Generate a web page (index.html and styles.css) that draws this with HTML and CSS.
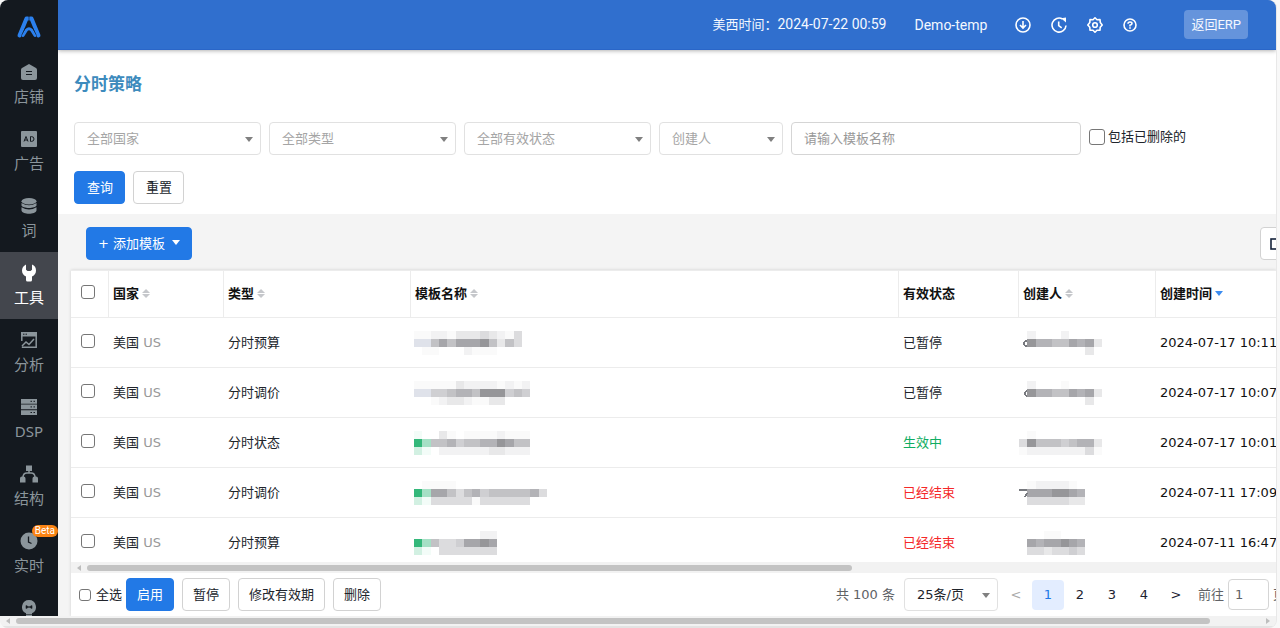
FILE: index.html
```html
<!DOCTYPE html>
<html lang="zh-CN">
<head>
<meta charset="utf-8">
<title>分时策略</title>
<link rel="stylesheet" href="styles.css">
</head>
<body>
<div class="window">
  <div class="shell">
    <nav class="sidebar">
      <a class="logo" href="#" aria-label="首页">
        <svg width="26" height="24" viewBox="0 0 26 24"><g fill="none" stroke="#2b80ee" stroke-width="4" stroke-linejoin="round" stroke-linecap="round"><path d="M3.500 20.500L10.500 3.500h1.500M22.500 20.500L15.500 3.500H14"/><path stroke-width="3" d="M7 20.500l3.500-5.500q2.500-2.500 5 0l3.500 5.500"/></g><path d="M13 1v4M5.500 20.500l4-8M20.500 20.500l-4-8" stroke="#14191f" stroke-width=".6"/></svg>
      </a>
      <a class="nav-item" href="#">
        <svg width="16" height="16" viewBox="0 0 16 16"><path fill="currentColor" d="M8 0l7 4c.6.400 1 .8 1 1.500V14q0 2-2 2H2q-2 0-2-2V5.500C0 4.800.4 4.400 1 4z"/><path d="M5 7.500h6M5 10.500h6" stroke="#14191f" stroke-width="1.200"/></svg>
        <span>店铺</span></a>
      <a class="nav-item" href="#">
        <svg width="16" height="16" viewBox="0 0 16 16"><rect width="16" height="16" rx="1" fill="currentColor"/><path d="M3 10.500l2-5 2 5M3.700 9h2.600M9.500 5.600v4.800h1q2.500 0 2.500-2.400t-2.500-2.400z" fill="none" stroke="#14191f"/></svg>
        <span>广告</span></a>
      <a class="nav-item" href="#">
        <svg width="16" height="16" viewBox="0 0 16 16"><g fill="currentColor"><ellipse cx="8" cy="3.200" rx="7.500" ry="3.200"/><path d="M.5 5q7.500 4.500 15 0v2.500c-1 3.300-14 3.300-15 0z"/><path d="M.5 9.300q7.500 4.500 15 0V12.500c-1 4.300-14 4.300-15 0z"/></g></svg>
        <span>词</span></a>
      <a class="nav-item active" href="#">
        <svg width="16" height="18" viewBox="0 0 16 18"><path fill="currentColor" d="M5 .5v5.200l1.500 1.300h3L11 5.700V.5q4 1.500 4 6 0 4-4 6V16q0 1.500-1.500 1.500h-3Q5 17.500 5 16v-3.500q-4-2-4-6t4-6z"/></svg>
        <span>工具</span></a>
      <a class="nav-item" href="#">
        <svg width="16" height="16" viewBox="0 0 16 16"><path fill="currentColor" d="M0 0h16v4.500H0z"/><path fill="none" stroke="currentColor" stroke-width="1.500" d="M.8 9V.8M15.200 1v14.200H.8M1 14l4-4 3 2.500L13 7"/><path d="M2 2.200h1.500M4.500 2.200H6" stroke="#14191f"/></svg>
        <span>分析</span></a>
      <a class="nav-item" href="#">
        <svg width="16" height="18" viewBox="0 0 16 18"><path fill="currentColor" d="M0 1h16v4.700H0zM0 6.600h16v4.700H0zM0 12.200h16v4.700H0z"/><path d="M9.500 3.300H11M12.500 3.300H14M9.500 8.900H11M12.500 8.900H14M9.500 14.500H11M12.500 14.500H14" stroke="#14191f"/></svg>
        <span>DSP</span></a>
      <a class="nav-item" href="#">
        <svg width="18" height="17" viewBox="0 0 18 17"><path fill="currentColor" d="M6 0h6v5.500H6zM0 13q0-2 2-2h1.500q2 0 2 2v4H0zM12.500 13q0-2 2-2H16q2 0 2 2v4h-5.500z"/><path d="M9 5v2.500M3 12q0-4.500 4-4.500h4q4 0 4 4.500" fill="none" stroke="currentColor" stroke-width="1.500"/></svg>
        <span>结构</span></a>
      <a class="nav-item" href="#">
        <svg width="18" height="18" viewBox="0 0 18 18"><circle cx="9" cy="9" r="8.500" fill="currentColor"/><path d="M8.500 4.500V10l3 1.500" fill="none" stroke="#14191f" stroke-width="1.300"/></svg>
        <span>实时</span><b class="beta">Beta</b></a>
      <a class="nav-item" href="#" aria-label="更多">
        <svg width="16" height="18" viewBox="0 0 16 18"><path fill="currentColor" d="M8 1a7 7 0 0 1 3 13.300V18H5v-3.700A7 7 0 0 1 8 1z"/><path d="M5 6.500v3l3-1.500 3 1.500v-3L8 8zM5 15.500h6" fill="#14191f" stroke="#14191f" stroke-width=".6"/></svg>
      </a>
    </nav>

    <div class="page">
      <header class="topbar">
        <span class="clock"><span class="zone">美西时间：</span>2024-07-22 00:59</span>
        <span class="user">Demo-temp</span>
        <div class="top-icons">
          <button class="icon-button" aria-label="下载"><svg width="16" height="16" viewBox="0 0 16 16"><g fill="none" stroke="#fff" stroke-width="1.600"><circle cx="8" cy="8" r="7"/><path d="M8 4v6.500M5 8l3 3 3-3"/></g></svg></button>
          <button class="icon-button" aria-label="历史"><svg width="16" height="16" viewBox="0 0 16 16"><g fill="none" stroke="#fff" stroke-width="1.600"><path d="M11.500 2A7 7 0 1 0 15 8.500M7.700 4.500v4.200l3 2.200"/></g><path d="M10 1.200l5-.7v5z" fill="#fff"/></svg></button>
          <button class="icon-button" aria-label="设置"><svg width="16" height="16" viewBox="0 0 16 16"><g fill="none" stroke="#fff" stroke-width="1.600" stroke-linejoin="round"><path d="M8 .8l2 2 3-.2.300 3L15.200 8l-2 2.300-.2 3-3-.1-2 2-2-2-3 .1-.2-3L.8 8l2-2.400.200-3 3 .2z"/><circle cx="8" cy="8" r="2.300"/></g></svg></button>
          <button class="icon-button" aria-label="帮助"><svg width="14" height="14" viewBox="0 0 14 14"><g fill="none" stroke="#fff" stroke-width="1.600"><circle cx="7" cy="7" r="6"/><path d="M5 5.800Q5 4 7 4t2 1.600Q9 6.700 7 7.200v1.300M7 9.300v1.500"/></g></svg></button>
        </div>
        <button class="erp">返回ERP</button>
      </header>

      <section class="search">
        <h1>分时策略</h1>
        <form class="filters">
          <span class="select"><select aria-label="国家"><option>全部国家</option></select></span>
          <span class="select"><select aria-label="类型"><option>全部类型</option></select></span>
          <span class="select"><select aria-label="有效状态"><option>全部有效状态</option></select></span>
          <span class="select narrow"><select aria-label="创建人"><option>创建人</option></select></span>
          <input class="name-input" type="text" placeholder="请输入模板名称" aria-label="模板名称">
          <label class="deleted"><input type="checkbox">包括已删除的</label>
        </form>
        <div class="actions">
          <button class="btn primary">查询</button>
          <button class="btn">重置</button>
        </div>
      </section>

      <section class="results">
        <div class="toolbar">
          <button class="btn primary add"><span class="plus">+</span>添加模板<i class="caret"></i></button>
          <button class="btn columns" aria-label="列设置"><svg width="14" height="14" viewBox="0 0 14 14"><rect x="1" y="2" width="12" height="10" fill="none" stroke="#16233b" stroke-width="1.600"/></svg></button>
        </div>
        <div class="panel">
          <div class="table-area">
            <table>
              <colgroup><col class="c-check"><col class="c-country"><col class="c-type"><col><col class="c-status"><col class="c-creator"><col class="c-time"></colgroup>
              <thead>
                <tr>
                  <th class="check"><input type="checkbox" aria-label="选择全部"></th>
                  <th>国家<i class="sort"></i></th>
                  <th>类型<i class="sort"></i></th>
                  <th>模板名称<i class="sort"></i></th>
                  <th>有效状态</th>
                  <th>创建人<i class="sort"></i></th>
                  <th>创建时间<i class="sort down"></i></th>
                </tr>
              </thead>
              <tbody>
                <tr><td class="check"><input type="checkbox" aria-label="选择"></td><td>美国 <span class="code">US</span></td><td>分时预算</td><td class="masked" data-mask="n1"></td><td>已暂停</td><td class="masked who" data-mask="c1"></td><td class="time">2024-07-17 10:11</td></tr>
                <tr><td class="check"><input type="checkbox" aria-label="选择"></td><td>美国 <span class="code">US</span></td><td>分时调价</td><td class="masked" data-mask="n2"></td><td>已暂停</td><td class="masked who" data-mask="c2"></td><td class="time">2024-07-17 10:07</td></tr>
                <tr><td class="check"><input type="checkbox" aria-label="选择"></td><td>美国 <span class="code">US</span></td><td>分时状态</td><td class="masked" data-mask="n3"></td><td class="on">生效中</td><td class="masked who" data-mask="c3"></td><td class="time">2024-07-17 10:01</td></tr>
                <tr><td class="check"><input type="checkbox" aria-label="选择"></td><td>美国 <span class="code">US</span></td><td>分时调价</td><td class="masked" data-mask="n4"></td><td class="ended">已经结束</td><td class="masked who" data-mask="c4"></td><td class="time">2024-07-11 17:09</td></tr>
                <tr><td class="check"><input type="checkbox" aria-label="选择"></td><td>美国 <span class="code">US</span></td><td>分时预算</td><td class="masked" data-mask="n5"></td><td class="ended">已经结束</td><td class="masked who" data-mask="c5"></td><td class="time">2024-07-11 16:47</td></tr>
              </tbody>
            </table>
          </div>
          <div class="scroll table-scroll"><i class="arrow left"></i><div class="track"><div class="thumb"></div></div></div>
          <footer class="footer">
            <label class="all"><input type="checkbox">全选</label>
            <div class="bulk">
              <button class="btn primary">启用</button>
              <button class="btn">暂停</button>
              <button class="btn">修改有效期</button>
              <button class="btn">删除</button>
            </div>
            <div class="pager">
              <span class="total">共 100 条</span>
              <span class="select size"><select aria-label="每页条数"><option>25条/页</option></select></span>
              <button class="pg prev" aria-label="上一页">&lt;</button>
              <button class="pg current">1</button>
              <button class="pg">2</button>
              <button class="pg">3</button>
              <button class="pg">4</button>
              <button class="pg next" aria-label="下一页">&gt;</button>
              <label class="jump">前往<input type="text" value="1"><span>页</span></label>
            </div>
          </footer>
        </div>
      </section>
    </div>
  </div>
  <div class="scroll window-scroll"><i class="arrow left"></i><div class="track"><div class="thumb"></div></div><i class="arrow right"></i></div>
</div>
<script src="mask.js"></script>
</body>
</html>
```

FILE: styles.css
```css
* { box-sizing: border-box; }

body {
  margin: 0;
  padding-right: 4px;
  background: #f8f8f8;
  color: #20242b;
  font: 13px/20px "DejaVu Sans", "Noto Sans CJK SC", sans-serif;
}

a { color: inherit; text-decoration: none; }
button, input, select { font: inherit; color: inherit; margin: 0; }
button { cursor: pointer; }
i { font-style: normal; }

input[type="checkbox"] {
  appearance: none;
  width: 14px;
  height: 14px;
  border: 1px solid #767676;
  border-radius: 3px;
  background: #fff;
  flex: none;
}
input[type="checkbox"]:checked { background: #2279e6; }

.window {
  display: flex;
  flex-direction: column;
  height: 100vh;
  overflow: hidden;
  border-radius: 8px;
  background: #f4f4f4;
  box-shadow: 1px 0 0 #e8e8e8;
}

.shell { display: flex; flex: 1; min-height: 0; }

/* Sidebar */
.sidebar {
  width: 58px;
  flex: none;
  overflow: hidden;
  background: #14191f;
  color: #8b959b;
}
.logo { display: flex; height: 51px; align-items: center; justify-content: center; padding-top: 2px; }
.nav-item {
  position: relative;
  display: flex;
  flex-direction: column;
  align-items: center;
  height: 67px;
  padding-top: 12px;
  font: 15px/22px "Noto Sans", "Noto Sans CJK SC", sans-serif;
}
.nav-item svg { height: 18px; }
.nav-item span { margin-top: 4px; }
.nav-item.active { background: #43464d; color: #fff; }
.beta {
  position: absolute;
  top: 5px;
  right: 0;
  padding: 0 3px;
  border-radius: 6px;
  background: #fa8314;
  color: #fff;
  font: 10px/12px Roboto, sans-serif;
}

/* Top bar */
.page { display: flex; flex: 1; flex-direction: column; min-width: 0; overflow: hidden; }
.topbar {
  position: relative;
  display: flex;
  flex: none;
  align-items: center;
  justify-content: flex-end;
  height: 50px;
  padding-right: 28px;
  background: #306fce;
  border-bottom: 1px solid #2a66c8;
  box-shadow: 0 1px 4px rgba(0, 0, 0, .3);
  color: #f4f8ff;
  font: 14px/20px Roboto, "Noto Sans CJK SC", sans-serif;
}
.zone { font-size: 13px; }
.user { margin: 0 28px; }
.top-icons { display: flex; gap: 20px; align-items: center; }
.icon-button { display: flex; padding: 0; border: 0; background: none; }
.erp {
  height: 29px;
  margin-left: 47px;
  padding: 0 7px;
  border: 0;
  border-radius: 4px;
  background: #6594dc;
  font-size: 13px;
}

/* Search form */
.search { flex: none; padding: 21px 16px 10px; background: #fff; }
h1 {
  margin: 0 0 27px;
  color: #3d8bbd;
  font: bold 17px/24px "Noto Sans CJK SC", sans-serif;
}
.filters { display: flex; gap: 8px; }
.select { position: relative; width: 187px; }
.select.narrow { width: 124px; }
.select::after {
  content: "";
  position: absolute;
  right: 8px;
  top: 15px;
  border: 4px solid transparent;
  border-top: 5px solid #808080;
  border-bottom: 0;
  pointer-events: none;
}
select {
  appearance: none;
  width: 100%;
  height: 33px;
  padding: 0 12px;
  border: 1px solid #e1e1e1;
  border-radius: 4px;
  background: #fff;
  color: #a5a5a5;
}
.name-input {
  width: 290px;
  height: 33px;
  padding: 0 12px;
  border: 1px solid #d5d5d5;
  border-radius: 4px;
}
.name-input::placeholder { color: #999; }
.deleted { display: flex; align-items: center; gap: 3px; height: 29px; }
.deleted input { width: 16px; height: 16px; }
.actions { display: flex; gap: 8px; margin-top: 16px; }

.btn {
  height: 33px;
  padding: 0 12px;
  border: 1px solid #d2d2d2;
  border-radius: 4px;
  background: #fff;
  white-space: nowrap;
}
.actions .btn { width: 51px; }
.btn.primary { border-color: #2279e6; background: #2279e6; color: #fff; }

/* Results */
.results { display: flex; flex: 1; flex-direction: column; min-height: 0; padding-left: 13px; }
.toolbar { display: flex; justify-content: space-between; padding: 13px 0 10px 15px; }
.toolbar .btn { display: flex; align-items: center; }
.plus { margin-right: 4px; }
.add { padding: 0 11px; }
.caret { margin: 0 0 3px 7px; border: 4px solid transparent; border-top: 5px solid #fff; border-bottom: 0; }
.columns { margin-right: -18px; padding: 0 9px; }

.panel {
  display: flex;
  flex: 1;
  flex-direction: column;
  min-height: 0;
  background: #fff;
  box-shadow: 0 0 3px rgba(0, 0, 0, .15);
}
.table-area { flex: 1; min-height: 0; overflow: hidden; }
table { width: 100%; table-layout: fixed; border-collapse: separate; border-spacing: 0; border-top: 1px solid #ececec; }
.c-check { width: 38px; }
.c-country { width: 115px; }
.c-type { width: 187px; }
.c-status { width: 120px; }
.c-creator { width: 137px; }
.c-time { width: 120px; }
th, td { padding: 0 0 0 4px; border-bottom: 1px solid #ececec; text-align: left; white-space: nowrap; overflow: hidden; }
th { height: 47px; border-right: 1px solid #ececec; color: #111; font-weight: bold; }
th:last-child { border-right: 0; }
td { height: 50px; }
.check { padding: 0 0 0 10px; }
.check input { display: block; margin-bottom: 4px; }
.code { color: #999; }
.on { color: #0fad62; }
.ended { color: #f52828; }
.time { color: #111; }
.masked svg { display: block; }
.masked { padding-left: 3px; }
.who { padding-left: 0; }

.sort {
  display: inline-block;
  width: 8px;
  height: 9px;
  margin-left: 3px;
  background: #c5c7cb;
  clip-path: polygon(50% 0, 100% 44%, 0 44%, 0 56%, 100% 56%, 50% 100%, 0 56%, 0 44%);
}
.sort.down { height: 5px; margin-bottom: 2px; background: #3b8cf0; clip-path: polygon(0 0, 100% 0, 50% 100%); }

/* Scroll bars */
.scroll { display: flex; flex: none; align-items: center; background: #f2f2f2; }
.track { flex: 1; }
.thumb { height: 6px; border-radius: 3px; background: #c3c3c3; }
.arrow { width: 4px; border: 3px solid transparent; }
.arrow.left { border-right: 4px solid #bdbdbd; border-left: 0; }
.arrow.right { border-left: 4px solid #bdbdbd; border-right: 0; }
.table-scroll { height: 11px; padding: 0 12px 0 6px; gap: 6px; }
.table-scroll .thumb { width: 65%; }
.window-scroll { height: 12px; padding: 0 6px; gap: 6px; border-bottom: 2px solid #e3e3e3; }
.window-scroll .thumb { width: 96%; }

/* Footer */
.footer { display: flex; flex: none; align-items: center; height: 43px; padding-left: 8px; }
.all { display: flex; align-items: center; gap: 5px; margin-right: 4px; }
.all input { width: 12px; height: 12px; }
.bulk { display: flex; gap: 8px; }
.bulk .btn { padding: 0 10px; }
.pager { display: flex; align-items: center; margin: 0 -10px 0 auto; }
.total { margin-right: 9px; color: #606266; }
.size { width: 94px; margin-right: 2px; }
.size select { color: #20242b; }
.pg { width: 32px; height: 30px; padding: 0; border: 0; border-radius: 4px; background: none; color: #1c2230; }
.prev { color: #aaa; }
.current { background: #e3edff; color: #2279e6; }
.jump { display: flex; align-items: center; gap: 4px; margin-left: 6px; color: #606266; }
.jump input { width: 41px; height: 31px; padding: 0 6px; border: 1px solid #d5d5d5; border-radius: 4px; }
```

FILE: mask.js
```js
// Pixelated placeholders for private values: three rows of shade codes each.
const shades = {
  1: "#fafafa", 2: "#f2f2f3", 3: "#e8e8e9", 4: "#dcdcde", 5: "#cfcfd2",
  6: "#c2c2c5", 7: "#b3b3b7", 8: "#a6a6aa", 9: "#969699",
  b: "#dfe2ea", G: "#33b87a", g: "#a5e0c5", h: "#d2f0e2", i: "#f3fcf8"
};
const masks = {
  n1: ["1122133343214", "bb68688896364", ".11...2111..."],
  n2: ["11111322221212", "bb556776999565", "..123321133..."],
  n3: ["i..31.11112111", "Gg667566779866", "hi.22222233222"],
  n4: [".1111...........", "Gg88646756666674", "hi444441444444.."],
  n5: ["........22", "Gg64458898", "hi.4444444"],
  c1: [".2...2....", ".977668783", "........3."],
  c2: [".2...1....", ".977668783", "........3."],
  c3: [".1........", "4966656773", "1222222241"],
  c4: [".122221.", ".8889987", ".4444433"],
  c5: ["...11...", ".8788987", ".4434454"]
};
const marks = {
  c1: "M8 10q-3-.5-3 2.500t3 2.500",
  c2: "M8 10q-2 0-2 2.500t2 2.500",
  c4: "M0 9h8M8 12l-2 4"
};
document.querySelectorAll("[data-mask]").forEach((cell) => {
  const id = cell.dataset.mask;
  let body = "";
  masks[id].forEach((row, y) => [...row].forEach((code, x) => {
    if (shades[code]) body += `<rect x="${x * 8.3}" y="${y * 8}" width="8.3" height="8" fill="${shades[code]}"/>`;
  }));
  if (marks[id]) body += `<path d="${marks[id]}" fill="none" stroke="#77797e" stroke-width="1.4"/>`;
  cell.innerHTML = `<svg width="134" height="24" shape-rendering="crispEdges" aria-hidden="true">${body}</svg>`;
});
```
